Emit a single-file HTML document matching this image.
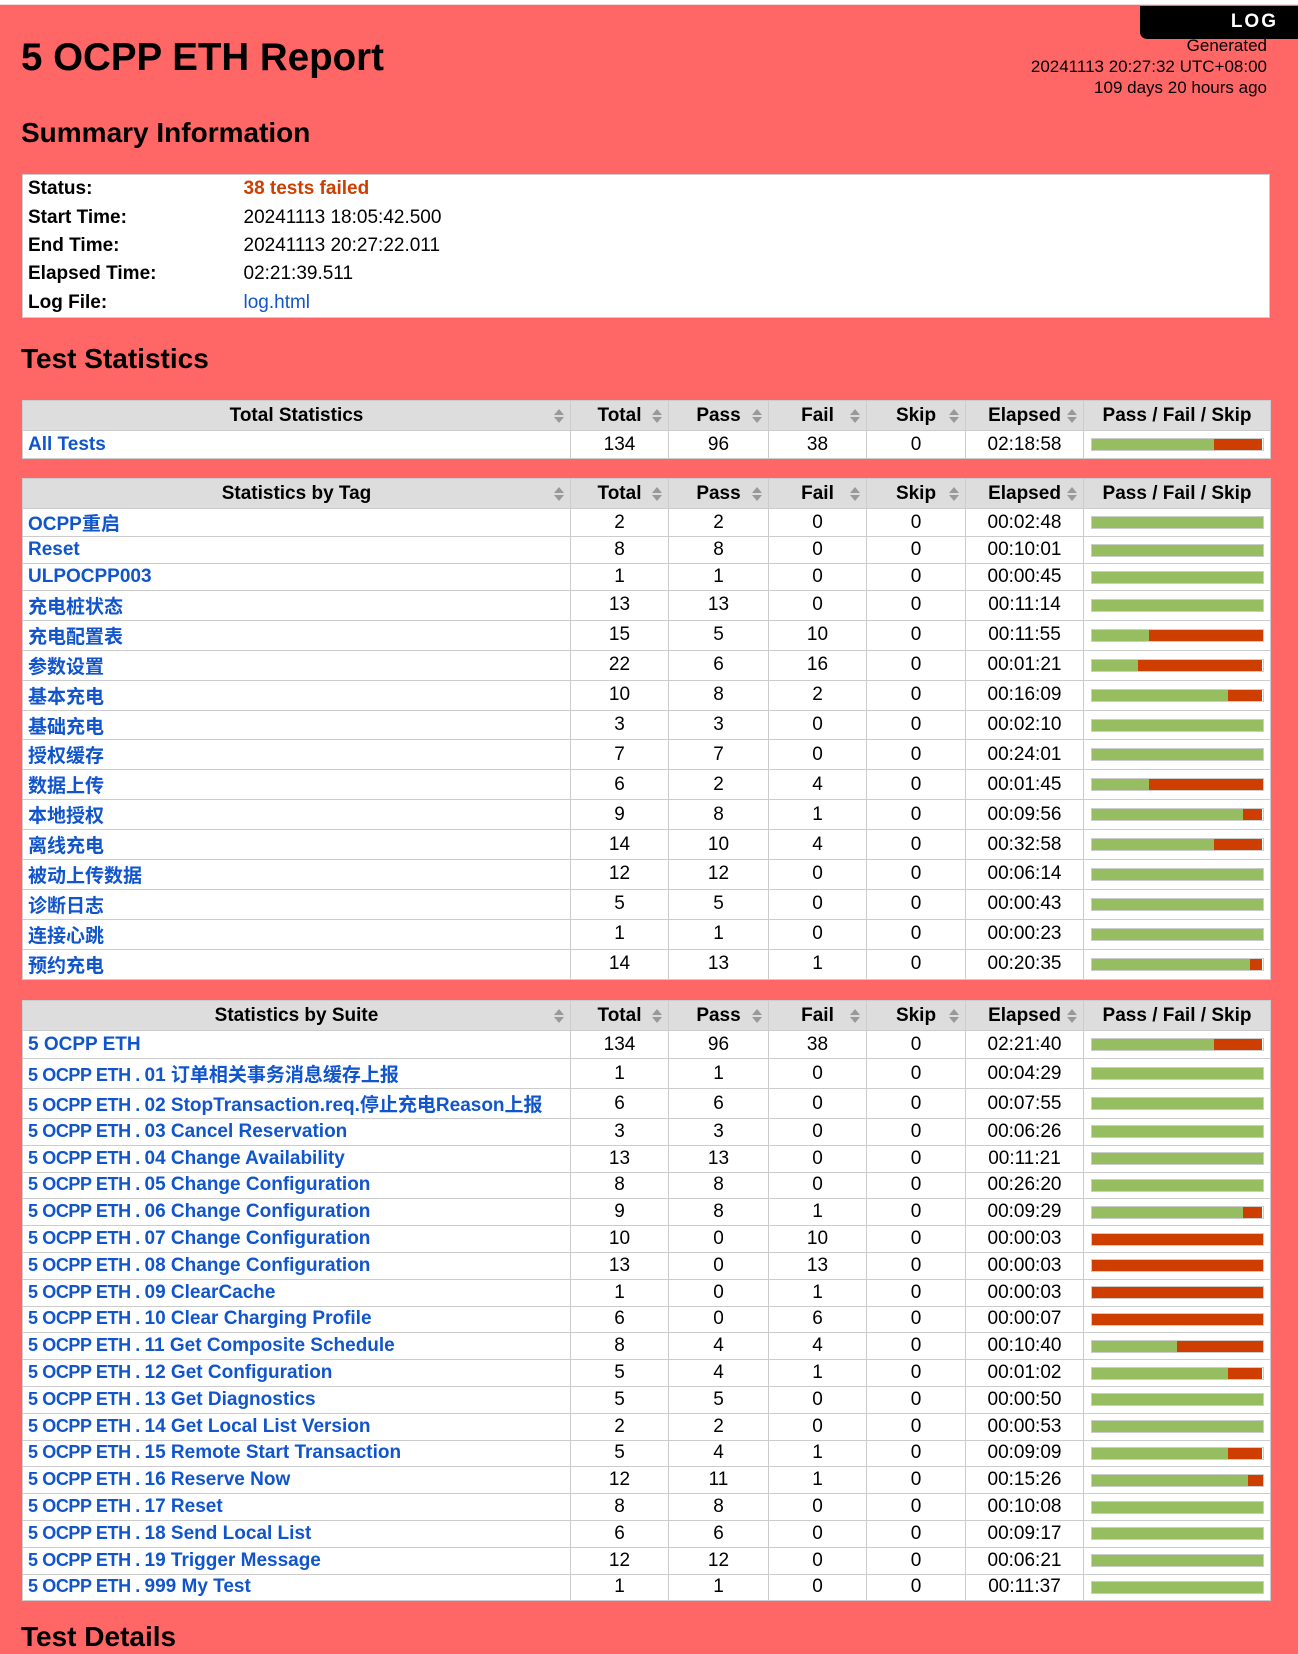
<!DOCTYPE html>
<html><head><meta charset="utf-8"><style>
*{box-sizing:border-box}
body{margin:0;background:#f66;font-family:"Liberation Sans","Noto Sans CJK SC",sans-serif;font-size:19px;color:#000;width:1298px;height:1642px;overflow:hidden;position:relative}
#strip{position:absolute;left:0;top:0;width:1298px;height:5px;background:#fff;border-bottom:1px solid #f8d8d8}
#log{position:absolute;left:1140px;top:6px;width:158px;height:33px;background:#000;border-bottom-left-radius:7px;color:#fff;font-weight:bold;font-size:19px;letter-spacing:2px;text-align:right;padding-right:20px;line-height:32px}
h1{position:absolute;left:21px;top:35px;margin:0;font-size:38.5px;font-weight:bold;line-height:46px}
#gen{position:absolute;right:31px;top:35px;text-align:right;font-size:17px;line-height:21px}
h2{position:absolute;left:21px;margin:0;font-size:28px;font-weight:bold;line-height:34px}
a{color:#15c;text-decoration:none}
table{position:absolute;left:22px;width:1248px;border-collapse:collapse;table-layout:fixed;background:#fff}
#sum{top:174px;height:144px;border:1px solid #ccc}
#sum td{padding:0 0 0 5px;height:28px;line-height:28px}
#sum th{text-align:left;padding:0 0 0 5px;width:216px;font-weight:bold}
.st td,.st th{border:1px solid #ccc;padding:0 6px;white-space:nowrap;overflow:hidden}
.st th{background:#ddd;font-weight:bold;height:30px;text-align:center;position:relative}
.st td{text-align:center}
.st td.n{text-align:left;font-weight:bold;padding-left:5px}
.ar{position:absolute;right:6px;top:8px;width:10px;height:14px}
.ar:before,.ar:after{content:"";position:absolute;left:0;border-left:5px solid transparent;border-right:5px solid transparent}
.ar:before{top:0;border-bottom:6px solid #999}
.ar:after{bottom:0;border-top:6px solid #999}
.bar{width:173px;height:13px;border:1px solid #ccc;display:flex;margin:0 auto}
.p{background:#97bd61;height:100%}.f{background:#ce3e01;height:100%}
.pn{font-size:18px;letter-spacing:-0.4px}
</style></head><body>
<div id="strip"></div>
<div id="log">LOG</div>
<h1>5 OCPP ETH Report</h1>
<div id="gen">Generated<br>20241113 20:27:32 UTC+08:00<br>109 days 20 hours ago</div>
<h2 style="top:116px">Summary Information</h2>
<table id="sum">
<tr><th>Status:</th><td style="color:#ce3e01;font-weight:bold">38 tests failed</td></tr>
<tr><th>Start Time:</th><td>20241113 18:05:42.500</td></tr>
<tr><th>End Time:</th><td>20241113 20:27:22.011</td></tr>
<tr><th>Elapsed Time:</th><td>02:21:39.511</td></tr>
<tr><th>Log File:</th><td><a>log.html</a></td></tr>
</table>
<h2 style="top:342px">Test Statistics</h2>
<div id="tables"></div>
<script>
function hdr(t){const c=["Total","Pass","Fail","Skip","Elapsed"];let h='<colgroup><col style="width:548px"><col style="width:98px"><col style="width:100px"><col style="width:98px"><col style="width:99px"><col style="width:118px"><col style="width:187px"></colgroup><tr><th>'+t+'<span class="ar"></span></th>';c.forEach(x=>h+='<th>'+x+'<span class="ar"></span></th>');return h+'<th>Pass / Fail / Skip</th></tr>';}
function row(n,t,p,f,e,h){const pw=t?p/t*100:0;return '<tr style="height:'+h+'px"><td class="n"><a>'+n+'</a></td><td>'+t+'</td><td>'+p+'</td><td>'+f+'</td><td>0</td><td>'+e+'</td><td><div class="bar"><div class="p" style="width:'+pw+'%"></div><div class="f" style="width:'+(100-pw)+'%"></div></div></td></tr>';}
let out='<table class="st" style="top:400px">'+hdr("Total Statistics")+row("All Tests",134,96,38,"02:18:58",28)+'</table>';
const tags=[["OCPP重启",2,2,0,"00:02:48"],["Reset",8,8,0,"00:10:01"],["ULPOCPP003",1,1,0,"00:00:45"],["充电桩状态",13,13,0,"00:11:14"],["充电配置表",15,5,10,"00:11:55"],["参数设置",22,6,16,"00:01:21"],["基本充电",10,8,2,"00:16:09"],["基础充电",3,3,0,"00:02:10"],["授权缓存",7,7,0,"00:24:01"],["数据上传",6,2,4,"00:01:45"],["本地授权",9,8,1,"00:09:56"],["离线充电",14,10,4,"00:32:58"],["被动上传数据",12,12,0,"00:06:14"],["诊断日志",5,5,0,"00:00:43"],["连接心跳",1,1,0,"00:00:23"],["预约充电",14,13,1,"00:20:35"]];
out+='<table class="st" style="top:478px">'+hdr("Statistics by Tag");
tags.forEach((r,i)=>out+=row(r[0],r[1],r[2],r[3],r[4],i==0?28:i<3?27:29.9));
out+='</table>';
const P='<span class="pn">5 OCPP ETH . </span>';
const su=[["5 OCPP ETH",134,96,38,"02:21:40"],[P+"01 订单相关事务消息缓存上报",1,1,0,"00:04:29"],[P+"02 StopTransaction.req.停止充电Reason上报",6,6,0,"00:07:55"],[P+"03 Cancel Reservation",3,3,0,"00:06:26"],[P+"04 Change Availability",13,13,0,"00:11:21"],[P+"05 Change Configuration",8,8,0,"00:26:20"],[P+"06 Change Configuration",9,8,1,"00:09:29"],[P+"07 Change Configuration",10,0,10,"00:00:03"],[P+"08 Change Configuration",13,0,13,"00:00:03"],[P+"09 ClearCache",1,0,1,"00:00:03"],[P+"10 Clear Charging Profile",6,0,6,"00:00:07"],[P+"11 Get Composite Schedule",8,4,4,"00:10:40"],[P+"12 Get Configuration",5,4,1,"00:01:02"],[P+"13 Get Diagnostics",5,5,0,"00:00:50"],[P+"14 Get Local List Version",2,2,0,"00:00:53"],[P+"15 Remote Start Transaction",5,4,1,"00:09:09"],[P+"16 Reserve Now",12,11,1,"00:15:26"],[P+"17 Reset",8,8,0,"00:10:08"],[P+"18 Send Local List",6,6,0,"00:09:17"],[P+"19 Trigger Message",12,12,0,"00:06:21"],[P+"999 My Test",1,1,0,"00:11:37"]];
out+='<table class="st" style="top:1000px">'+hdr("Statistics by Suite");
su.forEach((r,i)=>out+=row(r[0],r[1],r[2],r[3],r[4],i==0?28:i<3?30:26.8));
out+='</table>';
document.getElementById('tables').innerHTML=out;
</script>
<h2 style="top:1620px">Test Details</h2>
</body></html>
